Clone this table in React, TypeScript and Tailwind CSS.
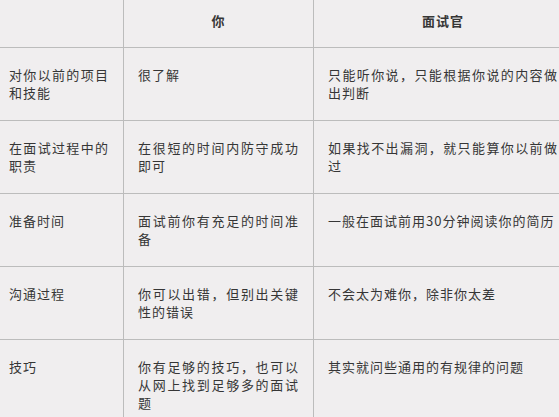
const rows: [string, string, string][] = [
  ["对你以前的项目和技能", "很了解", "只能听你说，只能根据你说的内容做出判断"],
  ["在面试过程中的职责", "在很短的时间内防守成功即可", "如果找不出漏洞，就只能算你以前做过"],
  ["准备时间", "面试前你有充足的时间准备", "一般在面试前用30分钟阅读你的简历"],
  ["沟通过程", "你可以出错，但别出关键性的错误", "不会太为难你，除非你太差"],
  ["技巧", "你有足够的技巧，也可以从网上找到足够多的面试题", "其实就问些通用的有规律的问题"],
];

const cell = "pt-[18px] pb-[18px] leading-[18px] text-justify";

export default function App() {
  return (
    <div
      className="w-[559px] h-[417px] overflow-hidden bg-[#f0eeef] text-[#363636] text-[13px] tracking-[1px]"
      style={{ fontFamily: '"Noto Sans CJK SC", "Noto Sans", sans-serif' }}
    >
      <div className="grid grid-cols-[124px_190px_258px] w-[572px]">
        <div className="h-[48px] border-b border-r border-[#bcbcbc]" />
        <div className="h-[48px] border-b border-r border-[#bcbcbc] pt-[12px] leading-[18px] text-center font-bold">
          你
        </div>
        <div className="h-[48px] border-b border-[#bcbcbc] pt-[12px] leading-[18px] text-center font-bold">
          面试官
        </div>
        {rows.map(([a, b, c]) => (
          <div key={a} className="contents">
            <div className={`${cell} pl-[9px] pr-[14px] border-b border-r border-[#bcbcbc]`}>{a}</div>
            <div className={`${cell} px-[14px] border-b border-r border-[#bcbcbc]`}>{b}</div>
            <div className={`${cell} px-[14px] border-b border-[#bcbcbc]`}>{c}</div>
          </div>
        ))}
      </div>
    </div>
  );
}
